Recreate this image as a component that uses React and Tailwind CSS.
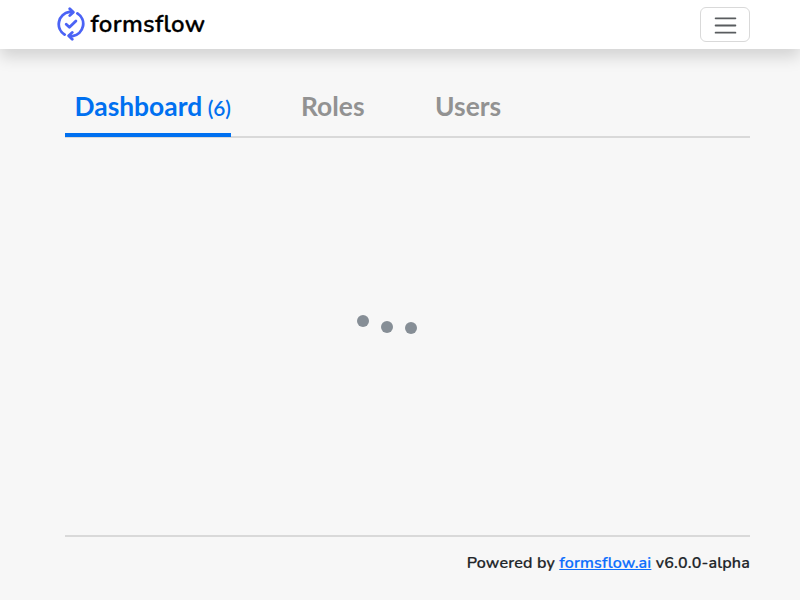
function Logo() {
  return (
    <svg className="h-[34px] w-[28px]" viewBox="0.6 0 26.8 34" preserveAspectRatio="none" fill="none" stroke="#4b63f5" strokeWidth="2.7" strokeLinecap="round" strokeLinejoin="round">
      <path d="M7.9 27.6A12.5 12.5 0 0 1 12.5 4.9L15.7 5.1" />
      <path d="M12.8 1.8L16.2 5.2L12.8 8.6" />
      <path d="M20.1 6.4A12.5 12.5 0 0 1 15.5 29.1L12.3 28.9" />
      <path d="M15.2 25.4L11.8 28.8L15.2 32.2" />
      <path d="M9.4 17.2L12.5 20.2L18.7 14" />
    </svg>
  );
}

function Header() {
  return (
    <header className="flex h-[49px] items-center justify-between bg-white pr-[50px] pl-[57px] shadow-[0_8px_16px_rgba(0,0,0,0.15)]">
      <div className="flex h-[49px] items-start gap-[5.5px] pt-[7px]">
        <Logo />
        <span className="font-['Nunito','Open_Sans',sans-serif] text-[24px] leading-[34px] font-semibold tracking-[0.3px] whitespace-nowrap text-black [-webkit-text-stroke:0.3px]">formsflow</span>
      </div>
      <button className="flex h-[35px] w-[50px] items-center justify-center rounded-[6px] border border-[#d9d9d9]" aria-label="Menu">
        <svg className="mt-px h-[27px] w-[27px]" viewBox="0 0 30 30" stroke="rgba(33,37,41,0.75)" strokeLinecap="round" strokeWidth="2">
          <path d="M4 7h22M4 15h22M4 23h22" />
        </svg>
      </button>
    </header>
  );
}

function Tabs() {
  return (
    <nav className="flex h-[53px] items-start border-b-2 border-[#d9d9d9] font-['Lato',sans-serif] text-[26.4px] leading-[39px] font-bold text-[#929292]">
      <div className="h-[52px] w-[166px] border-b-4 border-[#0070f0] pt-[2px] pl-[9.5px] whitespace-nowrap text-[#0070f0]">
        Dashboard<span className="ml-[5.5px] text-[20.8px] font-semibold">(6)</span>
      </div>
      <div className="ml-[70px] w-[64px] pt-[2px]">Roles</div>
      <div className="ml-[70px] pt-[2px]">Users</div>
    </nav>
  );
}

export default function App() {
  return (
    <div className="flex h-[600px] w-[800px] flex-col overflow-hidden bg-[#f7f7f7]">
      <Header />
      <main className="flex flex-1 flex-col pt-[36px] pr-[50px] pl-[65px]">
        <Tabs />
        <div className="flex flex-1 items-start gap-[12px] pt-[177px] pl-[292px]">
          <i className="size-[12px] rounded-full bg-[#868e96]" />
          <i className="mt-[5.5px] size-[12px] rounded-full bg-[#868e96]" />
          <i className="mt-[7px] size-[12px] rounded-full bg-[#868e96]" />
        </div>
      </main>
      <footer className="mr-[50px] ml-[65px] h-[65px] border-t-2 border-[#d9d9d9] pt-[14px] text-right font-['Nunito','Open_Sans',sans-serif] text-[16px] leading-6 font-semibold tracking-[0.16px] text-[#212529] [-webkit-text-stroke:0.2px]">
        Powered by <a className="text-[#0d6efd] underline" href="#">formsflow.ai</a> v6.0.0-alpha
      </footer>
    </div>
  );
}
